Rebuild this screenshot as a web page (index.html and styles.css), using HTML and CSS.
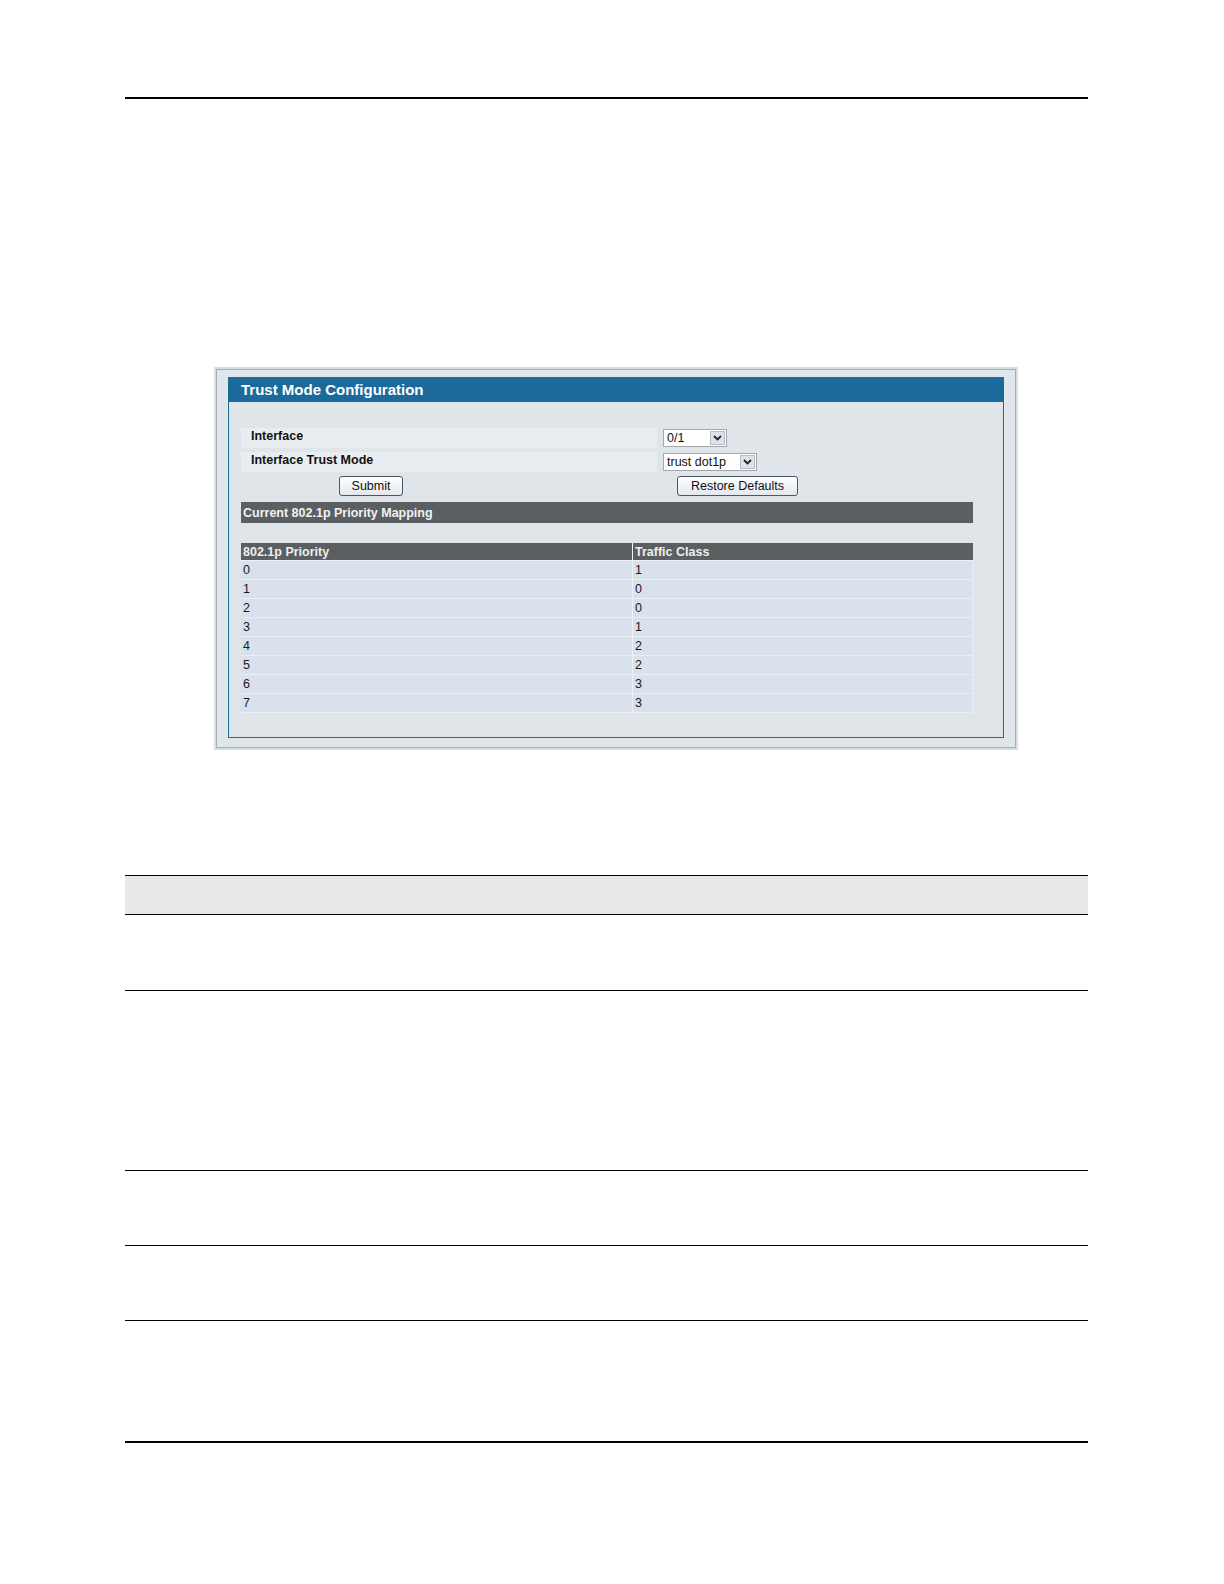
FILE: index.html
```html
<!DOCTYPE html>
<html>
<head>
<meta charset="utf-8">
<title>Trust Mode Configuration</title>
<link rel="stylesheet" href="styles.css">
</head>
<body>
<div class="page">
  <div class="rule rule-top"></div>

  <div class="figure">
    <div class="frame">
      <div class="panel">
        <div class="panel-title">Trust Mode Configuration</div>
        <div class="panel-body">
          <div class="form-row">
            <div class="label-cell">Interface</div>
            <div class="value-cell">
              <div class="select sel-small">
                <span class="sel-text">0/1</span>
                <span class="sel-btn"><svg width="9" height="6" viewBox="0 0 9 6"><path d="M1 1 L4.5 4.5 L8 1" fill="none" stroke="#223" stroke-width="1.8"/></svg></span>
              </div>
            </div>
          </div>
          <div class="form-row">
            <div class="label-cell">Interface Trust Mode</div>
            <div class="value-cell">
              <div class="select sel-wide">
                <span class="sel-text">trust dot1p</span>
                <span class="sel-btn"><svg width="9" height="6" viewBox="0 0 9 6"><path d="M1 1 L4.5 4.5 L8 1" fill="none" stroke="#223" stroke-width="1.8"/></svg></span>
              </div>
            </div>
          </div>
          <div class="button-row">
            <div class="btn btn-submit">Submit</div>
            <div class="btn btn-restore">Restore Defaults</div>
          </div>
          <div class="section-bar">Current 802.1p Priority Mapping</div>
          <div class="map-table">
            <div class="map-head">
              <div class="c1">802.1p Priority</div>
              <div class="c2">Traffic Class</div>
            </div>
            <div class="map-row"><div class="c1">0</div><div class="c2">1</div></div>
            <div class="map-row"><div class="c1">1</div><div class="c2">0</div></div>
            <div class="map-row"><div class="c1">2</div><div class="c2">0</div></div>
            <div class="map-row"><div class="c1">3</div><div class="c2">1</div></div>
            <div class="map-row"><div class="c1">4</div><div class="c2">2</div></div>
            <div class="map-row"><div class="c1">5</div><div class="c2">2</div></div>
            <div class="map-row"><div class="c1">6</div><div class="c2">3</div></div>
            <div class="map-row"><div class="c1">7</div><div class="c2">3</div></div>
          </div>
        </div>
      </div>
    </div>
  </div>

  <div class="doc-table">
    <div class="doc-head"></div>
    <div class="doc-row r1"></div>
    <div class="doc-row r2"></div>
    <div class="doc-row r3"></div>
    <div class="doc-row r4"></div>
  </div>

  <div class="rule rule-bottom"></div>
</div>
</body>
</html>
```
FILE: styles.css
```css
* { box-sizing: border-box; }
html, body { margin: 0; padding: 0; background: #ffffff; }
body { font-family: "Liberation Sans", Arial, sans-serif; color: #111; }

.page { width: 1224px; height: 1584px; padding-top: 97px; }

.rule { margin-left: 125px; width: 963px; height: 2px; background: #000; }
.rule-bottom { margin-top: 120px; }

/* screenshot figure */
.figure {
  margin-top: 268px;
  margin-left: 214px;
  width: 804px;
  height: 383px;
  background: #d3e0e3;
  padding: 2px;
}
.frame {
  height: 100%;
  border: 1px solid #a7afb3;
  background: #e0e6e9;
  padding: 7px 11px 10px 11px;
}
.panel {
  border: 1px solid #1d6d8e;
  background: #dfe5e9;
  height: 361px;
}
.panel-title {
  height: 24px;
  background: #1c6a9b;
  color: #ffffff;
  font-weight: bold;
  font-size: 15px;
  line-height: 24px;
  padding-left: 12px;
}
.panel-body { padding: 26px 30px 0 12px; }

.form-row { display: flex; height: 20px; margin-bottom: 4px; }
.label-cell {
  width: 416px;
  background: #e9edf0;
  font-weight: bold;
  font-size: 12.5px;
  line-height: 16px;
  padding-left: 10px;
  color: #111;
}
.value-cell { padding-left: 6px; }

.select {
  display: flex;
  height: 18px;
  border: 1px solid #a4a8ac;
  background: #ffffff;
  margin-top: 1px;
}
.sel-small { width: 64px; }
.sel-wide { width: 94px; }
.sel-text { flex: 1; font-size: 12.5px; line-height: 16px; padding-left: 3px; color: #111; }
.sel-btn {
  width: 15px;
  margin: 1px;
  background: #dfe3e8;
  border: 1px solid #b5bcc4;
  display: flex;
  align-items: center;
  justify-content: center;
}

.button-row { display: flex; height: 20px; margin-top: 3px; }
.btn {
  height: 20px;
  border: 1px solid #4a5766;
  border-radius: 3px;
  background: linear-gradient(#ffffff, #e3e8ee);
  font-size: 12.5px;
  line-height: 18px;
  text-align: center;
  color: #111;
}
.btn-submit { margin-left: 98px; width: 64px; }
.btn-restore { margin-left: 274px; width: 121px; }

.section-bar {
  margin-top: 6px;
  height: 21px;
  background: #5b5f61;
  color: #f2f2f2;
  font-weight: bold;
  font-size: 12.5px;
  line-height: 23px;
  padding-left: 2px;
}

.map-table { margin-top: 20px; }
.map-head { display: flex; height: 18px; }
.map-head .c1, .map-head .c2 {
  background: #5b5f61;
  color: #eeeeee;
  font-weight: bold;
  font-size: 12.5px;
  line-height: 19px;
  padding-left: 2px;
  border-bottom: 1px solid #eef2f6;
}
.c1 { width: 391px; }
.c2 { width: 341px; border-left: 1px solid #eef2f6; }
.map-row { display: flex; height: 19px; }
.map-row .c1, .map-row .c2 {
  background: #d9e1ec;
  font-size: 12.5px;
  line-height: 19px;
  padding-left: 2px;
  color: #1a1a1a;
  border-bottom: 1px solid #eaeff5;
}
.map-row .c2 { border-right: 1px solid #eaeff5; }

/* document table */
.doc-table { margin-top: 125px; margin-left: 125px; width: 963px; }
.doc-head { height: 40px; border-top: 1px solid #000; border-bottom: 1px solid #000; background: #e8e8e8; }
.doc-row { border-bottom: 1px solid #000; }
.r1 { height: 76px; }
.r2 { height: 180px; }
.r3 { height: 75px; }
.r4 { height: 75px; }
```
